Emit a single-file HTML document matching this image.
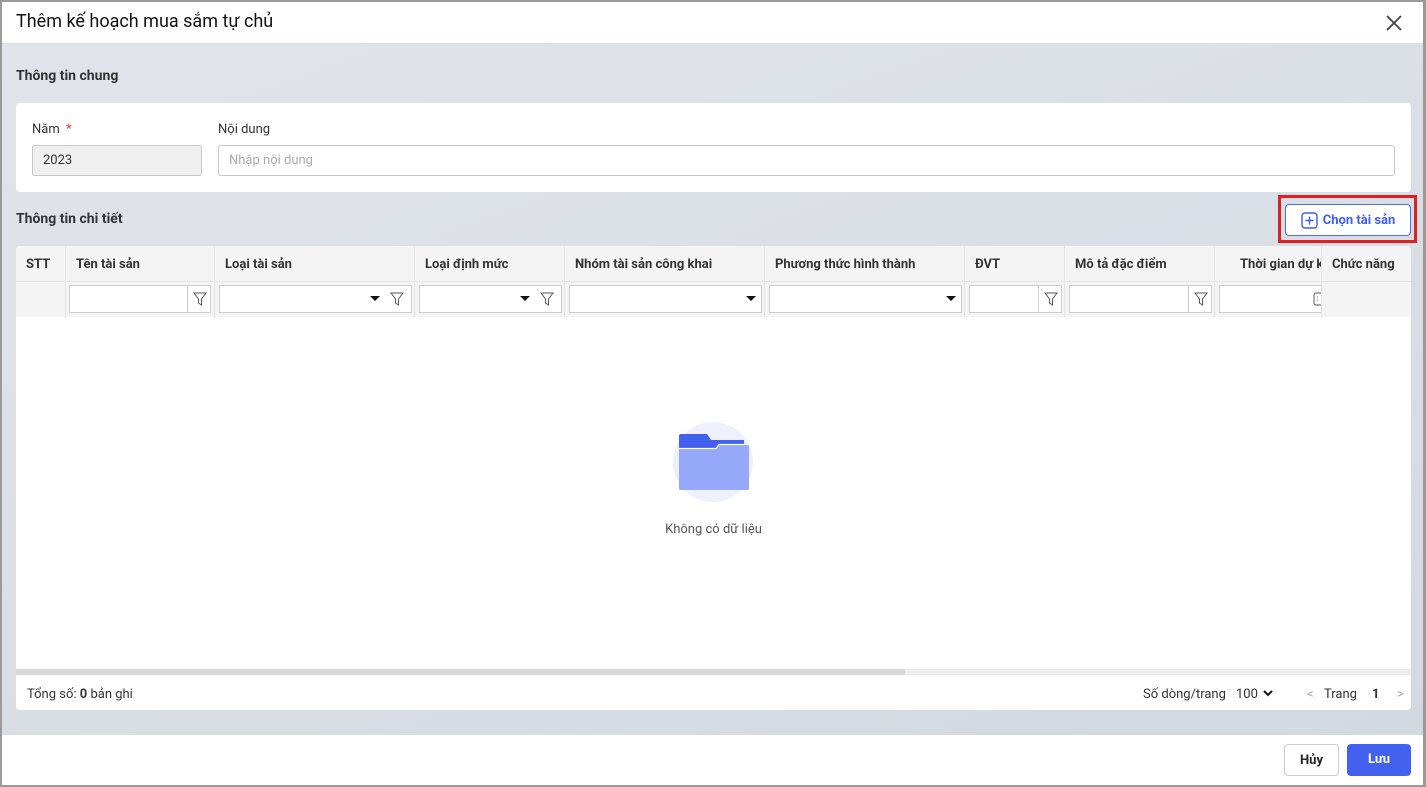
<!DOCTYPE html>
<html><head><meta charset="utf-8"><style>
*{box-sizing:border-box;margin:0;padding:0}
body{width:1426px;height:787px;background:#9a9a9a;font-family:Roboto,"Liberation Sans",sans-serif;color:#212121;position:relative;overflow:hidden}
.dlg{position:absolute;left:2px;top:2px;width:1421px;height:783px;background:#fff;overflow:hidden}
.hd{position:absolute;left:0;top:0;width:100%;height:42px;border-bottom:1px solid #e0e0e0;background:#fff}
.hd .t{position:absolute;left:14px;top:9px;font-size:18px;color:#111}
.bd{position:absolute;left:0;top:42px;width:100%;height:691px;background:linear-gradient(160deg,#e1e4ea,#d3d9e1)}
.ft{position:absolute;left:0;top:733px;width:100%;height:50px;background:#fff}
.a{position:absolute}
.sec{font-size:14px;font-weight:bold;color:#333}
.card{background:#fff;border-radius:4px}
.lbl{font-size:13px;color:#333}
.inp{border:1px solid #c8c8c8;border-radius:3px;height:31px;font-size:13px;padding:7px 10px}
.th{position:absolute;top:0;height:35px;font-size:13px;font-weight:bold;color:#333;padding:11px 10px 0;border-right:1px solid #e4e4e4;white-space:nowrap;overflow:hidden}
.fc{position:absolute;top:35px;height:36px;border-right:1px solid #e4e4e4}
.fi{position:absolute;top:4px;height:28px;border:1px solid #cfcfcf;background:#fff}
.dd{position:absolute;top:10px;width:0;height:0;border-left:5px solid transparent;border-right:5px solid transparent;border-top:5px solid #111}
.btn{position:absolute;border-radius:4px;font-size:13px;font-weight:bold;text-align:center}
</style></head><body>
<div class="dlg">
 <div class="hd"><div class="t">Thêm kế hoạch mua sắm tự chủ</div>
  <svg class="a" style="left:1384px;top:13px" width="16" height="16" viewBox="0 0 16 16"><path d="M1 1L15 15M15 1L1 15" stroke="#444" stroke-width="1.8"/></svg></div>
 <div class="bd">
  <div class="a sec" style="left:14px;top:24px">Thông tin chung</div>
  <div class="a card" style="left:14px;top:59px;width:1395px;height:89px">
   <div class="a lbl" style="left:16px;top:19px">Năm <span style="color:#e53935;margin-left:3px">*</span></div>
   <div class="a inp" style="left:16px;top:42px;width:170px;background:#f0f0f0;color:#333">2023</div>
   <div class="a lbl" style="left:202px;top:19px">Nội dung</div>
   <div class="a inp" style="left:202px;top:42px;width:1177px;color:#aaa">Nhập nội dung</div>
  </div>
  <div class="a sec" style="left:14px;top:167px">Thông tin chi tiết</div>
  <div class="a" style="left:1276px;top:151px;width:139px;height:48px;border:3px solid #e02020"></div>
  <div class="btn" style="left:1283px;top:160px;width:126px;height:32px;border:1px solid #4e6ef2;background:#fff;color:#3f5fe8;padding-top:8px;padding-left:22px">
   <svg class="a" style="left:15px;top:7px" width="17" height="17" viewBox="0 0 17 17"><rect x="1" y="1" width="15" height="15" rx="3" fill="none" stroke="#3f5fe8" stroke-width="1.4"/><path d="M8.5 4.5v8M4.5 8.5h8" stroke="#3f5fe8" stroke-width="1.4"/></svg>Chọn tài sản</div>
  <div class="a card" style="left:14px;top:202px;width:1395px;height:423px;border-radius:4px 4px 0 0;overflow:hidden">
   <div class="a" style="left:0;top:0;width:1395px;height:71px;background:#f4f4f4"></div>
   <div class="a" style="left:0;top:35px;width:1395px;height:1px;background:#e4e4e4"></div>
   <div class="th" style="left:0;width:50px">STT</div>
   <div class="th" style="left:50px;width:149px">Tên tài sản</div>
   <div class="th" style="left:199px;width:200px">Loại tài sản</div>
   <div class="th" style="left:399px;width:150px">Loại định mức</div>
   <div class="th" style="left:549px;width:200px">Nhóm tài sản công khai</div>
   <div class="th" style="left:749px;width:200px">Phương thức hình thành</div>
   <div class="th" style="left:949px;width:100px">ĐVT</div>
   <div class="th" style="left:1049px;width:150px">Mô tả đặc điểm</div>
   <div class="th" style="left:1199px;width:107px;padding-left:25px;padding-right:0">Thời gian dự kiến</div>
   <div class="th" style="left:1306px;width:89px;border-right:0">Chức năng</div>
   <div class="fc" style="left:0;width:50px"></div>
   <div class="fc" style="left:50px;width:149px"><div class="fi" style="left:3px;width:119px"></div><div class="fi" style="left:121px;width:24px"><svg class="a" style="left:5px;top:6px" width="14" height="14" viewBox="0 0 14 14"><path d="M1 1h12L8.5 7v6L5.5 11V7z" fill="none" stroke="#555" stroke-width="1"/></svg></div></div>
   <div class="fc" style="left:199px;width:200px"><div class="fi" style="left:4px;width:193px"><div class="dd" style="left:150px"></div><svg class="a" style="left:170px;top:6px" width="14" height="14" viewBox="0 0 14 14"><path d="M1 1h12L8.5 7v6L5.5 11V7z" fill="none" stroke="#555" stroke-width="1"/></svg></div></div>
   <div class="fc" style="left:399px;width:150px"><div class="fi" style="left:4px;width:143px"><div class="dd" style="left:100px"></div><svg class="a" style="left:120px;top:6px" width="14" height="14" viewBox="0 0 14 14"><path d="M1 1h12L8.5 7v6L5.5 11V7z" fill="none" stroke="#555" stroke-width="1"/></svg></div></div>
   <div class="fc" style="left:549px;width:200px"><div class="fi" style="left:4px;width:193px"><div class="dd" style="left:176px"></div></div></div>
   <div class="fc" style="left:749px;width:200px"><div class="fi" style="left:4px;width:193px"><div class="dd" style="left:176px"></div></div></div>
   <div class="fc" style="left:949px;width:100px"><div class="fi" style="left:4px;width:70px"></div><div class="fi" style="left:73px;width:24px"><svg class="a" style="left:5px;top:6px" width="14" height="14" viewBox="0 0 14 14"><path d="M1 1h12L8.5 7v6L5.5 11V7z" fill="none" stroke="#555" stroke-width="1"/></svg></div></div>
   <div class="fc" style="left:1049px;width:150px"><div class="fi" style="left:4px;width:120px"></div><div class="fi" style="left:123px;width:24px"><svg class="a" style="left:5px;top:6px" width="14" height="14" viewBox="0 0 14 14"><path d="M1 1h12L8.5 7v6L5.5 11V7z" fill="none" stroke="#555" stroke-width="1"/></svg></div></div>
   <div class="fc" style="left:1199px;width:107px;overflow:hidden"><div class="fi" style="left:4px;width:120px"><svg class="a" style="left:93px;top:5px" width="14" height="16" viewBox="0 0 14 16"><rect x="1" y="2" width="11" height="12" rx="2" fill="none" stroke="#777" stroke-width="1.2"/><path d="M4 6h1M8 6h1M4 9h1M8 9h1" stroke="#777"/></svg></div></div>
   <svg class="a" style="left:657px;top:176px" width="82" height="82" viewBox="0 0 82 82"><circle cx="40" cy="40" r="40" fill="#eef1fb"/><path d="M6 14a2 2 0 0 1 2-2h26l4 6h33v12H6z" fill="#4361ee"/><path d="M6 27h37l3-4h28.5a1.5 1.5 0 0 1 1.5 1.5v42a1.5 1.5 0 0 1-1.5 1.5H7.5A1.5 1.5 0 0 1 6 66.5z" fill="#96a8f9"/><path d="M6 26.5h37l3-4h29" stroke="#fff" stroke-width="1.2" fill="none"/></svg>
   <div class="a" style="left:0;top:276px;width:1395px;text-align:center;font-size:13px;color:#555">Không có dữ liệu</div>
  </div>
  <div class="a" style="left:14px;top:625px;width:1395px;height:6px;background:#eee"></div>
  <div class="a" style="left:14px;top:625px;width:889px;height:6px;background:#d6d6d6"></div>
  <div class="a card" style="left:14px;top:631px;width:1395px;height:35px;border-radius:0 0 4px 4px;font-size:13px;color:#333">
   <div class="a" style="left:11px;top:12px">Tổng số: <b>0</b> bản ghi</div>
   <div class="a" style="left:1127px;top:12px">Số dòng/trang</div>
   <div class="a" style="left:1220px;top:12px">100</div>
   <svg class="a" style="left:1247px;top:15px" width="10" height="8" viewBox="0 0 10 8"><path d="M1 1l4 4 4-4" stroke="#111" stroke-width="2" fill="none"/></svg>
   <div class="a" style="left:1291px;top:12px;color:#aaa">&lt;</div>
   <div class="a" style="left:1308px;top:12px">Trang</div>
   <div class="a" style="left:1356px;top:12px;font-weight:bold">1</div>
   <div class="a" style="left:1381px;top:12px;color:#aaa">&gt;</div>
  </div>
 </div>
 <div class="ft">
  <div class="btn" style="left:1282px;top:9px;width:55px;height:32px;border:1px solid #ccc;color:#222;padding-top:8px">Hủy</div>
  <div class="btn" style="left:1345px;top:9px;width:64px;height:32px;background:#4361ee;color:#fff;padding-top:8px">Lưu</div>
 </div>
</div>
</body></html>
